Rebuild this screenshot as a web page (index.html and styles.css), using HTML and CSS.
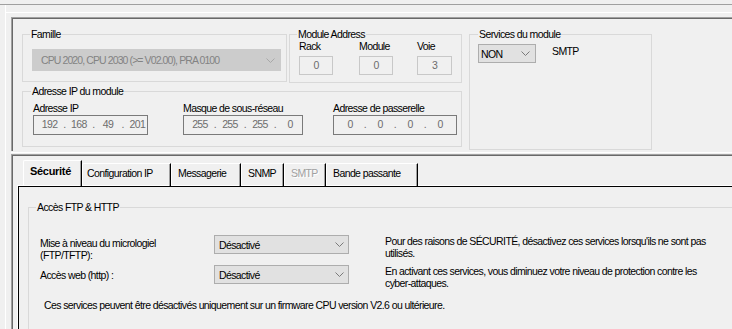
FILE: index.html
```html
<!DOCTYPE html>
<html lang="fr">
<head>
    <meta charset="UTF-8">
    <title>Module Ethernet</title>
    <link rel="stylesheet" href="styles.css">
</head>
<body>
    <div class="frame">
        <div class="frame-inner">
            <div class="frame-strip">

                <!-- Panneau du haut : identification du module -->
                <div class="panel top-panel">
                    <fieldset class="group g-famille">
                        <legend>Famille</legend>
                        <div class="select disabled famille-select">
                            <span>CPU 2020, CPU 2030 (&gt;= V02.00), PRA 0100</span>
                            <svg class="chev" width="9" height="5" viewBox="0 0 9 5"><polyline points="0.5,0.5 4.5,4.5 8.5,0.5"/></svg>
                        </div>
                    </fieldset>

                    <fieldset class="group g-module">
                        <legend>Module Address</legend>
                        <div class="addr-grid">
                            <div class="addr-col">
                                <label>Rack</label>
                                <div class="num-box">0</div>
                            </div>
                            <div class="addr-col">
                                <label>Module</label>
                                <div class="num-box">0</div>
                            </div>
                            <div class="addr-col">
                                <label>Voie</label>
                                <div class="num-box wide">3</div>
                            </div>
                        </div>
                    </fieldset>

                    <fieldset class="group g-services">
                        <legend>Services du module</legend>
                        <div class="service-row">
                            <div class="select non-select">
                                <span>NON</span>
                                <svg class="chev" width="9" height="5" viewBox="0 0 9 5"><polyline points="0.5,0.5 4.5,4.5 8.5,0.5"/></svg>
                            </div>
                            <span class="service-name">SMTP</span>
                        </div>
                    </fieldset>

                    <fieldset class="group g-ip">
                        <legend>Adresse IP du module</legend>
                        <div class="ip-row">
                            <div class="ip-field">
                                <label>Adresse IP</label>
                                <div class="ip-box w-ip">
                                    <span class="oct">192</span><span class="dot">.</span><span class="oct">168</span><span class="dot">.</span><span class="oct">49</span><span class="dot">.</span><span class="oct">201</span>
                                </div>
                            </div>
                            <div class="ip-field">
                                <label>Masque de sous-réseau</label>
                                <div class="ip-box w-mask">
                                    <span class="oct">255</span><span class="dot">.</span><span class="oct">255</span><span class="dot">.</span><span class="oct">255</span><span class="dot">.</span><span class="oct">0</span>
                                </div>
                            </div>
                            <div class="ip-field">
                                <label>Adresse de passerelle</label>
                                <div class="ip-box w-gw">
                                    <span class="oct">0</span><span class="dot">.</span><span class="oct">0</span><span class="dot">.</span><span class="oct">0</span><span class="dot">.</span><span class="oct">0</span>
                                </div>
                            </div>
                        </div>
                    </fieldset>
                </div>

                <div class="split"></div>

                <!-- Panneau du bas : onglets -->
                <div class="panel bottom-panel">
                    <div class="tabs">
                        <div class="tab active t1">Sécurité</div>
                        <div class="tab t2">Configuration IP</div>
                        <div class="tab t3">Messagerie</div>
                        <div class="tab t4">SNMP</div>
                        <div class="tab t5 off">SMTP</div>
                        <div class="tab t6">Bande passante</div>
                    </div>
                    <div class="tab-page">
                        <fieldset class="group g-acces">
                            <legend>Accès FTP &amp; HTTP</legend>
                            <div class="settings">
                                <div class="set-label first">Mise à niveau du micrologiel<br>(FTP/TFTP):</div>
                                <div class="select set-select">
                                    <span>Désactivé</span>
                                    <svg class="chev" width="9" height="5" viewBox="0 0 9 5"><polyline points="0.5,0.5 4.5,4.5 8.5,0.5"/></svg>
                                </div>
                                <div class="info">Pour des raisons de SÉCURITÉ, désactivez ces services lorsqu'ils ne sont pas<br>utilisés.</div>

                                <div class="set-label second">Accès web (http) :</div>
                                <div class="select set-select">
                                    <span>Désactivé</span>
                                    <svg class="chev" width="9" height="5" viewBox="0 0 9 5"><polyline points="0.5,0.5 4.5,4.5 8.5,0.5"/></svg>
                                </div>
                                <div class="info">En activant ces services, vous diminuez votre niveau de protection contre les<br>cyber-attaques.</div>
                            </div>
                            <p class="note">Ces services peuvent être désactivés uniquement sur un firmware CPU version V2.6 ou ultérieure.</p>
                        </fieldset>
                    </div>
                </div>

            </div>
        </div>
    </div>
</body>
</html>
```

FILE: styles.css
```css
/* Fond de fenêtre façon Windows */
body {
    margin: 0;
    width: 732px;
    height: 329px;
    overflow: hidden;
    background: #f0f0f0;
    color: #000;
    font-family: "Liberation Sans", Arial, sans-serif;
    font-size: 10.5px;
    line-height: 12px;
    letter-spacing: -0.6px;
}

/* Cadre extérieur */
.frame {
    margin-top: 4px;
    border-top: 1px solid #a0a0a0;
}
.frame-inner {
    margin-left: 5px;
    border-left: 1px solid #fff;
    padding-top: 7px;
}
.frame-strip {
    border-top: 1px solid #fff;
    padding: 4px 0 0 5px;
}

/* Panneaux en creux */
.panel {
    width: 760px;
    border-top: 1px solid #a0a0a0;
    border-left: 1px solid #a0a0a0;
    box-shadow: inset 1px 1px 0 #696969;
}
.top-panel {
    padding: 10px 0 1px 10px;
    display: grid;
    grid-template-columns: 265px 173px 188px;
    grid-template-rows: 55px 65px;
    column-gap: 2px;
    row-gap: 2px;
}
.split {
    height: 1px;
    margin: 1px 0;
    background: #fff;
}
.bottom-panel {
    padding: 5px 0 0 6px;
    height: 200px;
}

/* Cadres de groupe */
.group {
    margin: 0;
    padding: 0 0 0 9px;
    border: 1px solid #d9d9d9;
    min-width: 0;
    box-sizing: border-box;
}
.group legend {
    padding: 0 1px;
    margin-left: -2px;
    line-height: 12px;
}
.g-famille { height: 54px; }
.g-module { height: 55px; }
.g-services {
    grid-row: 1 / 3;
    grid-column: 3;
    width: 183px;
    height: 122px;
    margin-left: 5px;
    padding-left: 8px;
}
.g-services legend { margin-left: 0; }
.g-ip {
    grid-column: 1 / 3;
    height: 62px;
    padding: 5px 0 0 10px;
}

/* Listes déroulantes */
.select {
    box-sizing: border-box;
    display: flex;
    align-items: center;
    justify-content: space-between;
    height: 19px;
    border: 1px solid #adadad;
    background: #e1e1e1;
    padding: 0 4px 0 3px;
    white-space: nowrap;
}
.chev {
    flex: none;
    fill: none;
    stroke: #7a7a7a;
    stroke-width: 1;
}
.famille-select {
    width: 249px;
    height: 22px;
    margin-top: 9px;
    padding: 0 5px 0 8px;
    border-color: #cccccc;
    background: #cccccc;
    color: #838383;
    letter-spacing: -0.9px;
}
.famille-select .chev { stroke: #a8a8a8; }
.non-select {
    width: 58px;
    padding-left: 2px;
    padding-right: 5px;
}
.service-row {
    display: flex;
    align-items: flex-start;
    padding-top: 4px;
}
.service-name {
    margin: 1px 0 0 16px;
}

/* Adresse du module */
.addr-grid {
    display: grid;
    grid-template-columns: 60px 58px 35px;
}
.addr-col label { display: block; }
.num-box {
    box-sizing: border-box;
    width: 34px;
    height: 19px;
    margin-top: 4px;
    border: 1px solid #c8c8c8;
    color: #6d6d6d;
    text-align: center;
    line-height: 16px;
}
.num-box.wide { width: 35px; }

/* Adresses IP */
.ip-row {
    display: grid;
    grid-template-columns: 150px 150px auto;
}
.ip-field label { display: block; }
.ip-box {
    box-sizing: border-box;
    display: flex;
    align-items: center;
    height: 20px;
    margin-top: 1px;
    padding: 0 0 2px 6px;
    border: 1px solid #7a7a7a;
    color: #6d6d6d;
}
.ip-box .oct { width: 20px; text-align: center; }
.ip-box .dot { width: 10px; text-align: center; }
.w-ip { width: 115px; }
.w-mask { width: 120px; }
.w-gw { width: 124px; }

/* Onglets */
.tabs {
    display: flex;
    align-items: flex-end;
    height: 26px;
    padding-left: 5px;
}
.tab {
    box-sizing: border-box;
    height: 23px;
    padding: 3px 0 0 6px;
    border-top: 1px solid #fff;
    border-left: 1px solid #fff;
    border-right: 1px solid #000;
    border-top-left-radius: 2px;
    box-shadow: inset -1px 0 0 #a0a0a0;
    white-space: nowrap;
}
.tab.active {
    height: 26px;
    padding-top: 4px;
    font-size: 11px;
    font-weight: bold;
    letter-spacing: -0.3px;
}
.tab.off {
    color: #a0a0a0;
    text-shadow: 1px 1px 0 #fff;
}
.t1 { width: 59px; }
.t2 { width: 89px; padding-left: 4px; }
.t3 { width: 70px; }
.t4 { width: 43px; }
.t5 { width: 42px; }
.t6 { width: 92px; }

.tab-page {
    height: 160px;
    border-top: 1px solid #000;
    border-left: 1px solid #000;
    box-shadow: -1px -1px 0 #fff;
}

/* Accès FTP & HTTP */
.g-acces {
    width: 740px;
    margin: 14px 0 0 9px;
    padding: 22px 0 30px 11px;
}
.g-acces legend { margin-left: -4px; }
.settings {
    display: grid;
    grid-template-columns: 174px 171px auto;
    grid-template-rows: 30px auto;
    align-items: start;
}
.set-label.first { margin-top: 2px; }
.set-label.second { margin-top: 4px; }
.set-select {
    width: 135px;
    padding-left: 4px;
}
.info { white-space: nowrap; }
.note {
    margin: 10px 0 0 4px;
}
```
